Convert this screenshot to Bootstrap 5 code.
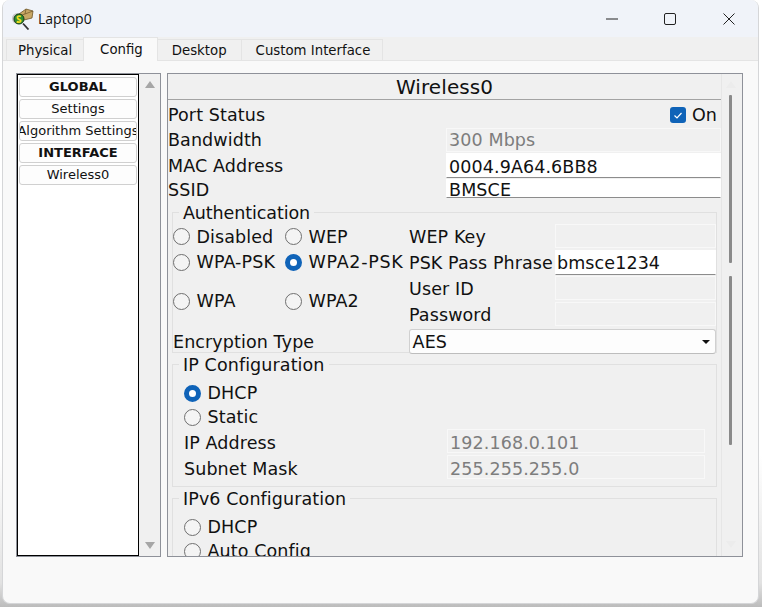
<!DOCTYPE html>
<html lang="en">
<head>
  <meta charset="UTF-8" />
  <meta name="viewport" content="width=device-width, initial-scale=1.0"/>
  <title>Laptop0</title>
  <link href="https://cdn.jsdelivr.net/npm/bootstrap@5.3.3/dist/css/bootstrap.min.css" rel="stylesheet"/>
  <style>
    html, body { height: 100%; overflow: hidden; }
    body {
      margin: 0;
      background: linear-gradient(#fff 75%, #e2e2e2 96%, #bcbcbc);
      font-family: "DejaVu Sans", Verdana, sans-serif;
      color: #111;
    }
    .app-window {
      width: 757px;
      height: 604px;
      margin-left: 2px;
      border: 1px solid #d5d6d8;
      border-top: 0;
      border-radius: 8px;
      background: #f9f9f9;
      overflow: hidden;
    }
    .title-bar {
      height: 37px;
      background: #f0f3f9;
      padding-left: 9px;
      gap: 4px;
      font-family: "Open Sans", sans-serif;
      font-size: 14px;
    }
    .win-btn { width: 48px; height: 37px; }
    .win-gap-a { margin-left: 10px; }
    .win-gap-b { margin-left: 11px; margin-right: 5px; }
    .tab-strip { height: 24px; background: #f0f0f0; border-bottom: 1px solid #e4e4e4; padding-left: 3px; font-size: 13.3px; }
    .tab-item {
      height: 21px;
      padding: 2px 14px 0;
      background: #f0f0f0;
      border: 1px solid #e4e4e4;
      border-bottom: 0;
      margin-left: -1px;
    }
    .tab-item.tab-on { background: #f9f9f9; height: 24px; margin-bottom: -1px; padding: 0 14px 0 16px; position: relative; z-index: 1; }
    .tab-first { padding: 2px 11px 0; margin-left: 0; }
    .tab-last { padding-right: 12px; }
    .work-area { padding: 12px 15px 0 13px; gap: 6px; height: 497px; }
    .side-panel { width: 145px; height: 484px; border: 1px solid #8e9199; background: #f0f0f0; }
    .side-list { width: 122px; border: 1px solid #000; background: #fff; padding: 2px 1px 0 1px; gap: 2px; margin: 0; }
    .side-btn {
      height: 20px;
      border: 1px solid #d0d0d0;
      border-radius: 3px;
      background: #fdfdfd;
      font-size: 13px;
      line-height: 18px;
      white-space: nowrap;
      overflow: hidden;
      display: flex;
      justify-content: center;
    }
    .side-btn.side-head { font-weight: 700; }
    .side-scroll { width: 22px; }
    .arrow-up { width: 0; height: 0; border: 5px solid transparent; border-top: 0; border-bottom: 7px solid #a6a6a6; margin-top: 7px; }
    .arrow-down { width: 0; height: 0; border: 5px solid transparent; border-bottom: 0; border-top: 7px solid #a6a6a6; margin-bottom: 7px; }
    .main-panel { width: 577px; height: 484px; border: 1px solid #8e9199; background: #f0f0f0; overflow: hidden; }
    .panel-body { width: 555px; height: 482px; overflow: hidden; font-size: 17.5px; letter-spacing: .1px; }
    .panel-title { height: 26px; border-bottom: 1px solid #a3a3a3; text-align: center; font-size: 20px; line-height: 26px; }
    .panel-scroll { width: 21px; border-left: 1px solid #e6e6e6; padding-top: 7px; }
    .scroll-bar { width: 3px; background: #8a8a8a; margin-left: 7px; border-radius: 1px; }
    .faint-up { width: 0; height: 0; border: 5px solid transparent; border-top: 0; border-bottom: 7px solid #ececec; margin: 0 0 7px 4px; }
    .faint-down { width: 0; height: 0; border: 5px solid transparent; border-bottom: 0; border-top: 7px solid #ececec; margin: 96px 0 0 4px; }
    .form-row { display: flex; align-items: center; }
    .form-row > label { margin: 0; }
    .low-label { padding-top: 4px; }
    .low-label-s { padding-top: 2px; }
    .field-box {
      height: 24px;
      margin: 0;
      padding: 0 2px;
      border: 1px solid #f8f8f8;
      background: #f0f0f0;
      line-height: 22px;
      font-size: 17.5px;
      color: #7d7d7d;
      white-space: nowrap;
      overflow: hidden;
    }
    .field-box.field-on { background: #fff; color: #111; border-color: #fff; border-bottom: 1px solid #8c8c8c; }
    .field-mac { height: 25px; line-height: 27px; }
    .field-psk { height: 25px; line-height: 25px; }
    .field-short { height: 19px; line-height: 21px; }
    .field-tight { padding-left: 1px; }
    .field-ip { line-height: 26px; }
    .top-field { width: 275px; margin-left: auto; }
    .group-box {
      position: relative;
      margin: 0 4px 0 4px;
      border: 1px solid #e0e0e0;
    }
    .group-cap { position: absolute; top: -10px; left: 6px; padding: 0 4px; background: #f0f0f0; line-height: 20px; }
    .cap-tight { letter-spacing: -.1px; }
    .dot {
      width: 17px;
      height: 17px;
      flex: none;
      border: 1px solid #6f6f6f;
      border-radius: 50%;
      background: #f4f4f4;
    }
    .dot.dot-on { border: 5px solid #0f63b8; background: #fff; }
    .radio-opt { display: flex; align-items: center; gap: 6.5px; white-space: nowrap; }
    .tick-box { width: 16px; height: 16px; background: #0f63b8; border-radius: 3px; }
    .check-wrap { margin-right: 4px; gap: 6px; }
    .auth-grid { display: grid; grid-template-columns: 112px 124px 146px 161px; margin-top: 10px; }
    .auth-cell { height: 26px; display: flex; align-items: center; white-space: nowrap; }
    .cell-text { padding-top: 2px; }
    .wide-txt { letter-spacing: .7px; }
    .auth-lower { height: 52px; }
    .auth-col-a { width: 112px; }
    .auth-col-b { width: 124px; }
    .auth-col-c { width: 146px; }
    .auth-col-d { width: 161px; }
    .enc-label { width: 236px; }
    .select-box {
      width: 308px;
      height: 25px;
      border: 1px solid #d0d0d0;
      border-bottom-color: #bdbdbd;
      border-radius: 3px;
      background: #fdfdfd;
      padding: 2px 5px 0 3px;
      line-height: 23px;
    }
    .caret-down { width: 0; height: 0; border: 4px solid transparent; border-bottom: 0; border-top: 4px solid #111; }
    .ip-row { height: 26px; padding-left: 11px; }
    .ip-row-s { height: 22px; }
    .ip-first { margin-top: 15px; }
    .ip-field { width: 258px; margin-left: auto; margin-right: 11px; }
    .box-auth { height: 141px; }
    .box-ip { height: 123px; margin-top: 11px; }
    .box-v6 { height: 80px; margin-top: 11px; }
    .row-port { height: 27px; }
    .row-band { height: 25px; }
    .row-mac { height: 26px; }
    .row-ssid { height: 20px; margin-bottom: 14px; }
    .thumb-a { height: 168px; }
    .thumb-b { height: 169px; margin-top: 13px; }
  </style>
</head>
<body>
  <div class="app-window">
    <div class="title-bar d-flex align-items-center">
      <svg width="22" height="22" viewBox="0 0 22 22">
        <circle cx="5.500" cy="10.500" r="5.500" fill="#c4c4c4"/>
        <path d="M7 6 14 1l7 2-1 7-8 2z" fill="#c8a765" stroke="#6e5526" stroke-width=".8"/>
        <path d="M14 1l-1 5 8-3M13 6l-3 1" fill="none" stroke="#6e5526" stroke-width=".7"/>
        <circle cx="7" cy="11" r="5" fill="#2f8f2f" stroke="#143c14"/>
        <path d="M9 8.500C7 7.500 5 8.300 5.500 10S9 11.500 8.800 13 6 14.500 4.800 13.500" fill="none" stroke="#f0dc20" stroke-width="1.800"/>
        <path d="M11 15.500l5.500 6" stroke="#333" stroke-width="1.800"/>
      </svg>
      <span>Laptop0</span>
      <div class="d-flex ms-auto">
        <div class="win-btn d-flex align-items-center justify-content-center">
          <svg width="12" height="12" viewBox="0 0 12 12"><path d="M0 6h12" stroke="#222" stroke-width="1"/></svg>
        </div>
        <div class="win-btn win-gap-a d-flex align-items-center justify-content-center">
          <svg width="12" height="12" viewBox="0 0 12 12"><rect x=".5" y=".5" width="11" height="11" rx="1.500" fill="none" stroke="#222"/></svg>
        </div>
        <div class="win-btn win-gap-b d-flex align-items-center justify-content-center">
          <svg width="12" height="12" viewBox="0 0 12 12"><path d="M.5.5l11 11M11.500.5l-11 11" stroke="#222" fill="none"/></svg>
        </div>
      </div>
    </div>

    <div class="tab-strip d-flex align-items-end">
      <div class="tab-item tab-first d-flex align-items-center">Physical</div>
      <div class="tab-item tab-on d-flex align-items-center">Config</div>
      <div class="tab-item d-flex align-items-center">Desktop</div>
      <div class="tab-item tab-last d-flex align-items-center">Custom Interface</div>
    </div>

    <div class="work-area d-flex">
      <div class="side-panel d-flex">
        <div class="side-list d-flex flex-column">
          <div class="side-btn side-head">GLOBAL</div>
          <div class="side-btn">Settings</div>
          <div class="side-btn">Algorithm Settings</div>
          <div class="side-btn side-head">INTERFACE</div>
          <div class="side-btn">Wireless0</div>
        </div>
        <div class="side-scroll d-flex flex-column justify-content-between align-items-center">
          <div class="arrow-up"></div>
          <div class="arrow-down"></div>
        </div>
      </div>

      <div class="main-panel d-flex">
        <div class="panel-body">
          <div class="panel-title">Wireless0</div>
          <div class="form-row row-port">
            <label class="low-label">Port Status</label>
            <div class="d-flex align-items-center ms-auto check-wrap low-label-s">
              <svg class="tick-box" viewBox="0 0 16 16"><path d="M4.500 8.500l2.500 2.500 4.500-5" fill="none" stroke="#fff" stroke-width="1.200"/></svg>
              <span class="low-label-s">On</span>
            </div>
          </div>
          <div class="form-row row-band">
            <label class="low-label-s">Bandwidth</label>
            <div class="field-box top-field">300 Mbps</div>
          </div>
          <div class="form-row row-mac">
            <label class="low-label-s">MAC Address</label>
            <div class="field-box field-on field-mac top-field">0004.9A64.6BB8</div>
          </div>
          <div class="form-row row-ssid">
            <label class="low-label">SSID</label>
            <div class="field-box field-on field-short top-field">BMSCE</div>
          </div>

          <div class="group-box box-auth">
            <div class="group-cap cap-tight">Authentication</div>
            <div class="auth-grid">
              <div class="auth-cell radio-opt"><span class="dot"></span><span class="cell-text">Disabled</span></div>
              <div class="auth-cell radio-opt"><span class="dot"></span><span class="cell-text">WEP</span></div>
              <div class="auth-cell cell-text">WEP Key</div>
              <div class="auth-cell"><div class="field-box w-100"></div></div>
              <div class="auth-cell radio-opt"><span class="dot"></span>WPA-PSK</div>
              <div class="auth-cell radio-opt"><span class="dot dot-on"></span><span class="wide-txt">WPA2-PSK</span></div>
              <div class="auth-cell cell-text">PSK Pass Phrase</div>
              <div class="auth-cell"><div class="field-box field-on field-psk field-tight w-100">bmsce1234</div></div>
            </div>
            <div class="d-flex auth-lower">
              <div class="d-flex align-items-center auth-col-a">
                <div class="radio-opt"><span class="dot"></span>WPA</div>
              </div>
              <div class="d-flex align-items-center auth-col-b">
                <div class="radio-opt"><span class="dot"></span>WPA2</div>
              </div>
              <div class="auth-col-c">
                <div class="auth-cell cell-text">User ID</div>
                <div class="auth-cell cell-text">Password</div>
              </div>
              <div class="auth-col-d">
                <div class="auth-cell"><div class="field-box w-100"></div></div>
                <div class="auth-cell"><div class="field-box w-100"></div></div>
              </div>
            </div>
            <div class="form-row">
              <label class="enc-label low-label-s">Encryption Type</label>
              <div class="select-box d-flex align-items-center justify-content-between">AES<span class="caret-down"></span></div>
            </div>
          </div>

          <div class="group-box box-ip">
            <div class="group-cap">IP Configuration</div>
            <div class="radio-opt ip-row ip-first"><span class="dot dot-on"></span>DHCP</div>
            <div class="radio-opt ip-row ip-row-s"><span class="dot"></span>Static</div>
            <div class="form-row ip-row">
              <label class="low-label">IP Address</label>
              <div class="field-box field-ip ip-field">192.168.0.101</div>
            </div>
            <div class="form-row ip-row">
              <label class="low-label">Subnet Mask</label>
              <div class="field-box field-ip ip-field">255.255.255.0</div>
            </div>
          </div>

          <div class="group-box box-v6">
            <div class="group-cap">IPv6 Configuration</div>
            <div class="radio-opt ip-row ip-first"><span class="dot"></span>DHCP</div>
            <div class="radio-opt ip-row ip-row-s"><span class="dot"></span>Auto Config</div>
          </div>
        </div>
        <div class="panel-scroll">
          <div class="faint-up"></div>
          <div class="scroll-bar thumb-a"></div>
          <div class="scroll-bar thumb-b"></div>
          <div class="faint-down"></div>
        </div>
      </div>
    </div>
  </div>
  <script src="https://cdn.jsdelivr.net/npm/bootstrap@5.3.3/dist/js/bootstrap.bundle.min.js"></script>
</body>
</html>
